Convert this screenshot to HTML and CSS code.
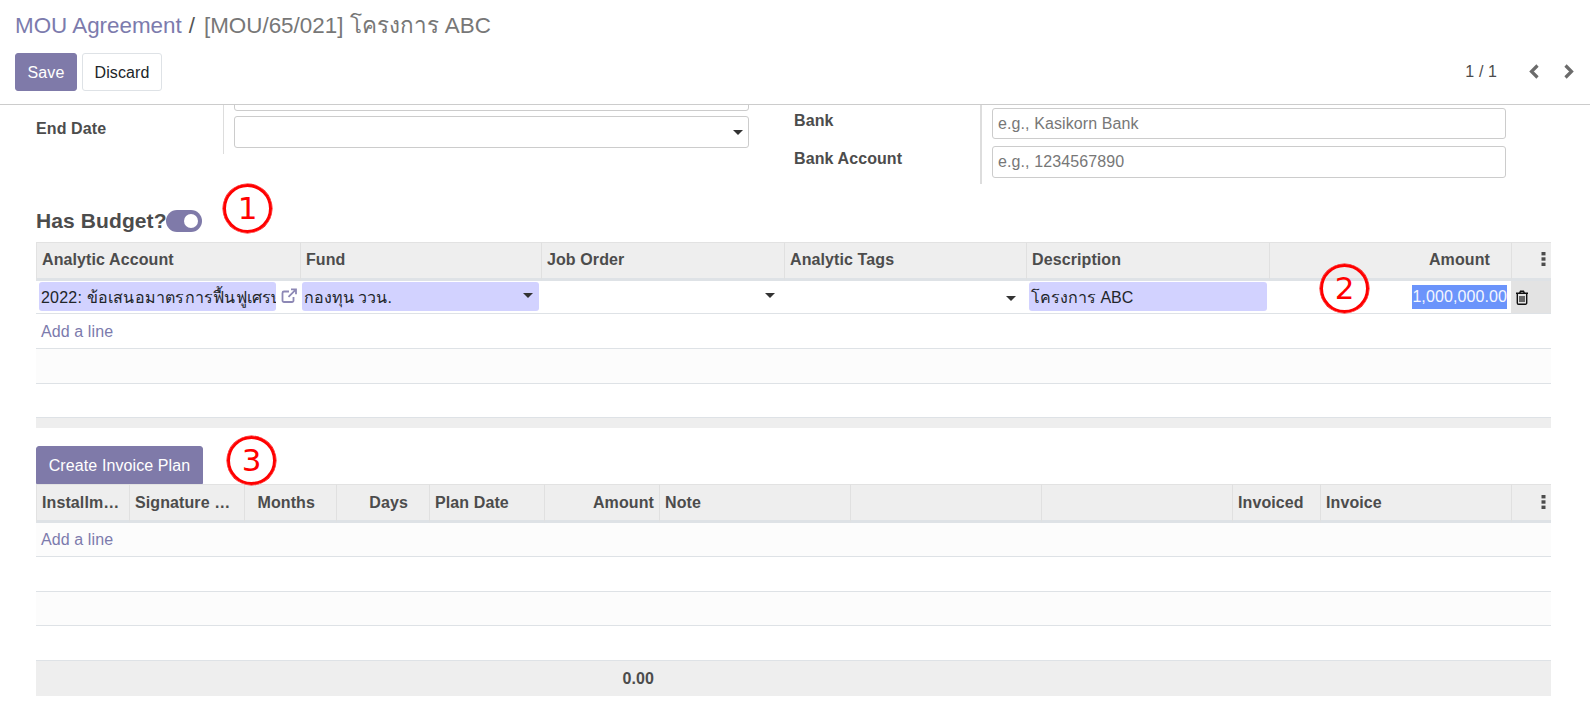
FILE: index.html
```html
<!DOCTYPE html>
<html lang="th">
<head>
<meta charset="utf-8">
<title>MOU Agreement</title>
<link rel="stylesheet" href="styles.css">
</head>
<body>
<div class="app">
  <header class="panel">
    <div class="crumbs"><a class="crumb-link">MOU Agreement</a><span class="crumb-sep">/</span><span class="crumb-cur">[MOU/65/021] โครงการ ABC</span></div>
    <div class="panel-bar">
      <div class="actions">
        <button class="btn btn-primary btn-save">Save</button>
        <button class="btn btn-light">Discard</button>
      </div>
      <div class="pager">
        <span class="pager-text">1 / 1</span>
        <svg class="chev" viewBox="0 0 10 15"><path d="M8.500 1.500 L2.500 7.500 L8.500 13.500"/></svg>
        <svg class="chev" viewBox="0 0 10 15"><path d="M1.500 1.500 L7.500 7.500 L1.500 13.500"/></svg>
      </div>
    </div>
  </header>
  <main class="sheet">
    <div class="groups">
      <section class="group group-left">
        <div class="labels labels-left"><div class="lbl">End Date</div></div>
        <div class="values values-left">
          <div class="input input-cut"></div>
          <div class="input input-select"><span class="caret"></span></div>
        </div>
      </section>
      <section class="group group-right">
        <div class="labels labels-right"><div class="lbl lbl-bank">Bank</div><div class="lbl">Bank Account</div></div>
        <div class="values values-right">
          <div class="input input-bank"><span class="ph">e.g., Kasikorn Bank</span></div>
          <div class="input"><span class="ph">e.g., 1234567890</span></div>
        </div>
      </section>
    </div>

    <div class="budget"><span class="budget-label">Has Budget?</span><span class="toggle"><span class="knob"></span></span></div>

    <table class="grid grid-budget">
      <colgroup><col class="b1"><col class="b2"><col class="b3"><col class="b4"><col class="b3"><col class="b4"><col class="bk"></colgroup>
      <thead><tr>
        <th>Analytic Account</th><th>Fund</th><th>Job Order</th><th>Analytic Tags</th><th>Description</th><th class="num amount-h">Amount</th><th class="kebab-h"><svg class="kebab" viewBox="0 0 4 14"><rect y="0" width="4" height="3.4"/><rect y="5.3" width="4" height="3.4"/><rect y="10.6" width="4" height="3.4"/></svg></th>
      </tr></thead>
      <tbody>
        <tr class="r-edit">
          <td class="c-account"><div class="acct"><span class="req acct-field">2022: ข้อเสนอมาตรการฟื้นฟูเศรษฐกิจ</span><svg class="ext" viewBox="0 0 16 16"><path d="M12.500 9v3.500a1.500 1.500 0 0 1-1.500 1.500H3a1.500 1.500 0 0 1-1.500-1.500V5A1.500 1.500 0 0 1 3 3.500h5"/><path d="M10 1.300h5v5M15 1.300L7.500 8.800"/></svg></div></td>
          <td class="c-fund"><div class="req req-select">กองทุน ววน.<span class="caret caret-fund"></span></div></td>
          <td class="c-sel"><span class="caret caret-job"></span></td>
          <td class="c-sel"><span class="caret caret-tag"></span></td>
          <td class="c-desc"><div class="req">โครงการ ABC</div></td>
          <td class="c-amt"><span class="selected">1,000,000.00</span></td>
          <td class="c-trash"><svg class="trash" viewBox="0 0 14 15"><path class="t-line" d="M1 3.300h12M4.500 3.300l1-2h3l1 2M2.300 3.300v9.700a1.200 1.200 0 0 0 1.200 1.200h7a1.200 1.200 0 0 0 1.200-1.200V3.300"/><path class="t-bars" d="M5 6v6M7 6v6M9 6v6"/></svg></td>
        </tr>
        <tr class="r-35 r-white"><td colspan="7" class="c-add"><a class="add">Add a line</a></td></tr>
        <tr class="r-35 r-strip"><td colspan="7"></td></tr>
        <tr class="r-34 r-white"><td colspan="7"></td></tr>
      </tbody>
      <tfoot><tr class="r-foot-thin"><td colspan="7"></td></tr></tfoot>
    </table>

    <button class="btn btn-primary btn-plan">Create Invoice Plan</button>

    <table class="grid grid-plan">
      <colgroup><col class="p1"><col class="p2"><col class="p3"><col class="p4"><col class="p2"><col class="p2"><col class="p8"><col class="p8"><col class="p8"><col class="p9"><col class="p8"><col class="bk"></colgroup>
      <thead><tr>
        <th>Installm…</th><th>Signature …</th><th class="num num-pad">Months</th><th class="num num-pad">Days</th><th>Plan Date</th><th class="num">Amount</th><th>Note</th><th></th><th></th><th>Invoiced</th><th>Invoice</th><th class="kebab-h"><svg class="kebab" viewBox="0 0 4 14"><rect y="0" width="4" height="3.4"/><rect y="5.3" width="4" height="3.4"/><rect y="10.6" width="4" height="3.4"/></svg></th>
      </tr></thead>
      <tbody>
        <tr class="r-34 r-strip"><td colspan="12" class="c-add"><a class="add">Add a line</a></td></tr>
        <tr class="r-35 r-white"><td colspan="12"></td></tr>
        <tr class="r-34 r-strip"><td colspan="12"></td></tr>
        <tr class="r-35 r-white"><td colspan="12"></td></tr>
      </tbody>
      <tfoot><tr class="r-foot"><td colspan="5"></td><td class="num foot-total">0.00</td><td colspan="6"></td></tr></tfoot>
    </table>

    <div class="mark mark-1">1</div>
    <div class="mark mark-2">2</div>
    <div class="mark mark-3">3</div>
  </main>
</div>
</body>
</html>
```
FILE: styles.css
```css
* { box-sizing: border-box; }
html, body { margin: 0; height: 100%; background: #fff; }
body {
  font-family: "Liberation Sans", "Noto Sans", sans-serif;
  font-size: 16px;
  line-height: 24px;
  letter-spacing: 0.1px;
  color: #212529;
  overflow: hidden;
}
.app { width: 1590px; height: 714px; display: flex; flex-direction: column; overflow: hidden; }

/* control panel */
.panel { height: 105px; flex: none; border-bottom: 1px solid #ccc; padding: 13px 15px 0 15px; }
.crumbs { font-size: 22.4px; line-height: 26px; letter-spacing: 0; display: flex; color: #777; }
.crumb-link { color: #7c7bad; margin-right: 7px; }
.crumb-sep { color: #555; margin-right: 9px; }
.panel-bar { display: flex; justify-content: space-between; align-items: center; margin-top: 14px; }
.actions { display: flex; gap: 5px; }
.btn { font: inherit; letter-spacing: inherit; height: 38px; border-radius: 3px; padding: 2px 0 0; cursor: pointer; }
.btn-primary { background: #7f7aa9; border: 1px solid #7f7aa9; color: #fff; }
.btn-light { background: #fff; border: 1px solid #dee2e6; color: #212529; width: 80px; }
.btn-save { width: 62px; }
.pager { display: flex; align-items: center; color: #4c4c4c; }
.pager-text { margin-right: 32px; }
.chev { width: 10px; height: 15px; fill: none; stroke: #6b6b6b; stroke-width: 3.2; margin-right: 25px; position: relative; top: -1px; }
.chev:last-child { margin-right: 1px; }

/* sheet */
.sheet { flex: 1; position: relative; padding: 0 39px 0 36px; overflow: hidden; }
.groups { display: flex; gap: 45px; }
.group { display: flex; width: 713px; }
.group-left { height: 49px; }
.group-right { height: 79px; width: 712px; }
.labels { width: 187px; flex: none; color: #4c4c4c; font-weight: 700; }
.labels-left { padding-top: 12px; }
.labels-right { padding-top: 4px; width: 186px; }
.lbl-bank { margin-bottom: 14px; }
.values { flex: 1; padding-left: 10px; }
.values-left { border-left: 1px solid #ddd; }
.values-right { border-left: 2px solid #ddd; padding-top: 3px; }
.input {
  height: 32px; border: 1px solid #ccc; border-radius: 3px; background: #fff;
  padding: 0 5px; display: flex; align-items: center; position: relative;
}
.input-cut { margin-top: -26px; margin-bottom: 5px; }
.input-bank { margin-bottom: 7px; height: 31px; }
.ph { color: #777; }
.caret { position: absolute; width: 0; height: 0; border-left: 5px solid transparent; border-right: 5px solid transparent; border-top: 5px solid #333; }
.input-select .caret { right: 5px; top: 13px; }

.budget { display: flex; align-items: center; margin-top: 25px; height: 24px; }
.budget-label { font-size: 21px; font-weight: 700; color: #4c4c4c; }
.toggle { width: 36px; height: 22px; border-radius: 11px; background: #7f7aa9; margin-left: -1px; display: flex; align-items: center; justify-content: flex-end; padding-right: 4px; }
.knob { width: 14px; height: 14px; border-radius: 50%; background: #fff; }

/* tables */
.grid { width: 1515px; table-layout: fixed; border-collapse: separate; border-spacing: 0; }
.grid-budget { margin-top: 9px; }
.b1 { width: 265px; } .b2 { width: 241px; } .b3 { width: 243px; } .b4 { width: 242px; } .bk { width: 39px; }
.p1 { width: 94px; } .p2 { width: 115px; } .p3 { width: 92px; } .p4 { width: 93px; } .p8 { width: 191px; } .p9 { width: 88px; }
.grid th {
  height: 39px; padding: 0 5px; background: #eee; color: #4c4c4c; font-weight: 700; text-align: left;
  border-top: 1px solid #e2e2e2; border-right: 1px solid #e0e0e0; border-bottom: 3px solid #dee2e6;
  white-space: nowrap; overflow: hidden;
}
.grid-budget th { padding-bottom: 2px; }
.grid th:first-child { border-left: 1px solid #e2e2e2; }
.grid th:last-child { border-right: 0; }
.grid .num { text-align: right; }
.grid .amount-h { padding-right: 21px; }
.grid .num-pad { padding-right: 21px; }
.grid .kebab-h { text-align: right; padding-right: 5px; }
.kebab { width: 5px; height: 14px; fill: #4c4c4c; display: inline-block; vertical-align: -1px; }
.grid td { padding: 0; border-bottom: 1px solid #dee2e6; }
.r-edit td { height: 33px; background: #fff; vertical-align: middle; }
.r-35 td { height: 35px; }
.r-34 td { height: 34px; }
.r-white td { background: #fff; }
.r-strip td { background: #fcfcfc; }
.r-foot-thin td { height: 10px; background: #eee; border-bottom: 0; }
.r-foot td { height: 35px; background: #eee; border-bottom: 0; }
.grid .c-add { padding-left: 5px; vertical-align: middle; }
.grid-budget .c-add { padding-top: 2px; }
.add { color: #7c7bad; }
.grid .foot-total { font-weight: 700; color: #4c4c4c; padding-right: 6px; }

.req { background: #d2d2ff; border-radius: 3px; height: 29px; line-height: 31px; padding: 0 2px; margin-bottom: 1px; position: relative; color: #212529; overflow: hidden; white-space: nowrap; letter-spacing: 0; }
.grid .c-account { padding-left: 3px; }
.acct { display: flex; align-items: center; }
.acct-field { width: 237px; flex: none; display: block; letter-spacing: 0.2px; }
.ext { width: 16px; height: 16px; fill: none; stroke: #8d88b5; stroke-width: 1.8; margin-left: 5px; position: relative; top: -1px; }
.grid .c-fund { padding: 0 3px 0 1px; }
.grid .c-desc { padding: 0 3px 0 2px; }
.c-sel { position: relative; }
.caret-fund { right: 6px; top: 11px; }
.caret-job { right: 10px; top: 12px; }
.caret-tag { right: 11px; top: 15px; }
.grid .c-amt { text-align: right; padding-right: 4px; border-right: 1px solid #e3e3e3; }
.selected { background: #6b94fb; color: #f4f7ff; display: inline-block; line-height: 24px; }
.grid .c-trash { background: #e3e3e3; padding-left: 3px; }
.trash { width: 14px; height: 15px; display: block; fill: none; stroke: #111; stroke-width: 1.4; }
.t-bars { stroke-width: 1.2; }

.btn-plan { display: block; width: 167px; height: 38px; margin-top: 18px; border-bottom-left-radius: 0; border-bottom-right-radius: 0; }

/* hand-drawn annotations on top of the form */
.mark {
  position: absolute; width: 49px; height: 49px; border: 3px solid #f00; border-radius: 50%;
  box-shadow: 0 0 0 0.5px #f00;
  display: flex; align-items: center; justify-content: center;
  font-family: "DejaVu Sans", sans-serif; font-size: 31px; line-height: 1; letter-spacing: 0; color: #f00;
}
.mark-1 { left: 223px; top: 79px; }
.mark-2 { left: 1320px; top: 159px; }
.mark-3 { left: 227px; top: 331px; }
```
